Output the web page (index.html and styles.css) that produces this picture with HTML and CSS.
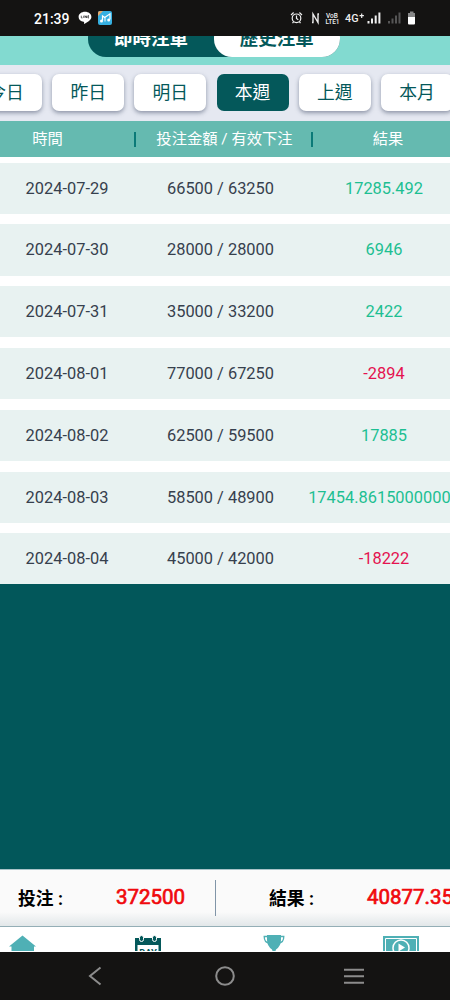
FILE: index.html
```html
<!DOCTYPE html>
<html lang="zh-Hant">
<head>
    <meta charset="UTF-8">
    <meta name="viewport" content="width=device-width, initial-scale=1.0">
    <title>歷史注單</title>
    <link rel="stylesheet" href="styles.css">
</head>
<body>
    <div class="status">
        <span class="clock">21:39</span>
        <svg class="line-icon" width="14" height="14" viewBox="0 0 14 14">
            <path d="M7 .8C3.400 .8.600 3 .600 5.900c0 2.500 2.100 4.400 5 4.900.7.200.6.600.4 2.200 2.700-1.400 7.400-4 7.400-7.100C13.400 3 10.600.8 7 .8z" fill="#fff"/>
            <path d="M3.300 4.700v2.200h1.200M5.700 4.700v2.200M7 6.900V4.700l1.500 2.200V4.700M11 4.700H9.900v2.200H11M9.900 5.800h1" fill="none" stroke="#222" stroke-width=".7"/>
        </svg>
        <svg class="music-icon" width="14" height="14" viewBox="0 0 14 14">
            <rect width="14" height="14" rx="2" fill="#36b0e2"/>
            <path d="M0 2a2 2 0 0 1 2-2h3L0 5z" fill="#e8a86a"/>
            <path d="M4.500 9.500V5l2.200 1.500L12 2.800v5.700" fill="none" stroke="#fff" stroke-width="1.200"/>
            <circle cx="3.500" cy="10" r="1.500" fill="#fff"/>
            <circle cx="10.700" cy="9" r="1.500" fill="#fff"/>
            <path d="M7 6.500v4" stroke="#fff"/>
        </svg>
        <svg class="signals" width="130" height="18" viewBox="0 0 130 18">
            <g fill="none" stroke="#eee" stroke-width="1.200">
                <circle cx="7.500" cy="9.300" r="4.300"/>
                <path d="M7.500 6.500v3l1.800 1.200M2 6l2.600-2.500M13 6l-2.600-2.500M4.500 13l-1 1.200M10.500 13l1 1.200"/>
                <path d="M24 13.500V5l5 8.500V5M23 13.500h1.600M28.400 5H30" stroke-width="1.400"/>
            </g>
            <g class="glyphs" fill="#eee">
                <text x="37" y="8.500" font-size="6.500">VoB</text>
                <text x="36.500" y="14.500" font-size="6.500">LTE1</text>
                <text x="56" y="13.200" font-size="10.800">4G</text>
                <path d="M70.500 6.700h4.400M72.700 4.500v4.400" stroke="#eee" stroke-width="1.200"/>
                <path d="M78.500 12h2v2.500h-2zM82 9.500h2v5h-2zM85.700 6.500h2v8h-2zM89.400 3.500h2v11h-2z"/>
                <path d="M99 12h2v2.500h-2zM102.500 9.500h2v5h-2zM106 6.500h2v8h-2zM109.500 3.500h2v11h-2z" fill="#555"/>
            </g>
            <path d="M121 2.500h3.500V4h1.500v5h-7V4h2z" fill="#888"/>
            <path d="M119 8h7v6.500q0 1-1 1h-5q-1 0-1-1z" fill="#fff"/>
        </svg>
    </div>

    <div class="top">
        <div class="switch">
            <div class="switch-item">即時注單</div>
            <div class="switch-item on">歷史注單</div>
        </div>
    </div>

    <div class="tabs">
        <div class="tab">今日</div>
        <div class="tab">昨日</div>
        <div class="tab">明日</div>
        <div class="tab active">本週</div>
        <div class="tab">上週</div>
        <div class="tab">本月</div>
    </div>

    <div class="thead">
        <span class="th-time">時間</span>
        <span class="th-bet">投注金額 / 有效下注</span>
        <span class="th-result">結果</span>
    </div>

    <div class="list">
        <div class="row"><span>2024-07-29</span><span>66500 / 63250</span><span class="win">17285.492</span></div>
        <div class="row"><span>2024-07-30</span><span>28000 / 28000</span><span class="win">6946</span></div>
        <div class="row"><span>2024-07-31</span><span>35000 / 33200</span><span class="win">2422</span></div>
        <div class="row"><span>2024-08-01</span><span>77000 / 67250</span><span class="lose">-2894</span></div>
        <div class="row"><span>2024-08-02</span><span>62500 / 59500</span><span class="win">17885</span></div>
        <div class="row"><span>2024-08-03</span><span>58500 / 48900</span><span class="win">17454.86150000000</span></div>
        <div class="row"><span>2024-08-04</span><span>45000 / 42000</span><span class="lose">-18222</span></div>
    </div>

    <div class="empty"></div>

    <div class="total">
        <div class="total-bet"><b>投注 :</b><span class="sum">372500</span></div>
        <div class="total-result"><b>結果 :</b><span class="sum">40877.35</span></div>
    </div>

    <div class="menu">
        <svg class="home" width="28" height="24" viewBox="0 0 28 24">
            <path d="M13.500 8.500L27 19.500H25V24H2.500v-4.500H0z" fill="#4fb0b5"/>
        </svg>
        <svg class="day" width="26" height="24" viewBox="0 0 26 24">
            <path d="M0 11h26v13H0z" fill="#04585a"/>
            <path d="M2.500 18h21v6h-21z" fill="#fff"/>
            <g fill="#04585a" stroke="#fff"><rect x="4.500" y="8.500" width="4" height="6" rx="2"/><rect x="17.500" y="8.500" width="4" height="6" rx="2"/></g>
            <text class="day-text" x="13" y="29" font-size="9.500" text-anchor="middle" fill="#04585a">DAY</text>
        </svg>
        <svg class="cup" width="22" height="24" viewBox="0 0 22 24">
            <path d="M4 8h14v5q0 6-5 9.500l-.5 1.500h-3l-.5-1.500q-5-3.500-5-9.500z" fill="#4fb0b5"/>
            <path d="M5 9.500H1.200q0 6 5 6.500M17 9.500h3.800q0 6-5 6.500" fill="none" stroke="#4fb0b5" stroke-width="1.300"/>
        </svg>
        <svg class="video" width="36" height="24" viewBox="0 0 36 24">
            <path d="M0 9h36v15H0z" fill="#4fb0b5"/>
            <path d="M2.500 24V11.500h31V24" fill="none" stroke="#fff"/>
            <circle cx="18" cy="21" r="8" fill="none" stroke="#fff" stroke-width="1.500"/>
            <path d="M15.500 16.500l6.500 4-6.500 4z" fill="#fff"/>
        </svg>
    </div>

    <div class="navbar">
        <svg class="back" width="14" height="20" viewBox="0 0 14 20"><path d="M12.500 1.500L2 10l10.500 8.500" fill="none" stroke="#8c8c8c" stroke-width="2"/></svg>
        <svg class="circle" width="20" height="20" viewBox="0 0 20 20"><circle cx="10" cy="10" r="8.800" fill="none" stroke="#8c8c8c" stroke-width="2"/></svg>
        <svg class="bars" width="20" height="20" viewBox="0 0 20 20"><path d="M0 3.700h20M0 10.200h20M0 16.700h20" stroke="#8c8c8c" stroke-width="2"/></svg>
    </div>
</body>
</html>
```
FILE: styles.css
```css
* {
    box-sizing: border-box;
}
body {
    margin: 0;
    width: 450px;
    height: 1000px;
    overflow: hidden;
    display: flex;
    flex-direction: column;
    background-color: #fff;
    font-family: Roboto, "Noto Sans CJK TC", sans-serif;
}
svg {
    display: block;
    flex: none;
}
.status {
    height: 36px;
    flex: none;
    display: flex;
    align-items: center;
    padding-left: 34px;
    background-color: #141312;
    color: #fff;
}
.clock {
    width: 44px;
    font-size: 14px;
    font-weight: 500;
    padding-top: 2px;
}
.music-icon {
    margin-left: 6px;
}
.signals {
    margin-left: 177px;
}
.glyphs {
    font-weight: 500;
}
.top {
    height: 29px;
    flex: none;
    display: flex;
    align-items: flex-end;
    padding: 0 0 8px 88px;
    overflow: hidden;
    background-color: #82dad0;
}
.switch {
    width: 252px;
    height: 37px;
    flex: none;
    display: flex;
    border-radius: 18px;
    background-color: #04585a;
    color: #fff;
    font-size: 18.5px;
    font-weight: 700;
    line-height: 39px;
    text-align: center;
}
.switch-item {
    width: 126px;
}
.switch-item.on {
    height: 36.5px;
    width: 125.5px;
    background-color: #fff;
    color: #04585a;
    border-radius: 18px;
}
.tabs {
    height: 56px;
    flex: none;
    display: flex;
    gap: 10.2px;
    padding-top: 9px;
    overflow: hidden;
    background-color: #e5e8f1;
}
.tab {
    width: 72px;
    height: 37px;
    flex: none;
    border-radius: 7px;
    background-color: #fff;
    box-shadow: 0 2px 4px rgba(70, 80, 105, .55);
    color: #04585a;
    font-size: 17.8px;
    line-height: 37px;
    text-align: center;
}
.tab:first-child {
    margin-left: -30px;
}
.tab.active {
    background-color: #04585a;
    box-shadow: none;
    color: #fff;
}
.thead {
    height: 36px;
    flex: none;
    display: flex;
    align-items: center;
    background-color: #65bab0;
    color: #fff;
    font-size: 15.3px;
    line-height: 15px;
    text-align: center;
}
.thead span {
    flex: none;
}
.th-time {
    width: 136px;
    padding-right: 39px;
    border-right: 2px solid #0b7a78;
}
.th-bet {
    width: 177px;
    padding-left: 2px;
    border-right: 2px solid #0b7a78;
}
.th-result {
    width: 150px;
}
.list {
    flex: none;
    display: flex;
    flex-direction: column;
    gap: 10.6px;
    padding-top: 5.6px;
}
.row {
    height: 51.2px;
    display: grid;
    grid-template-columns: 134px 173px 154px;
    align-items: center;
    background-color: #e8f2f1;
    color: #36404d;
    font-size: 16.4px;
    text-align: center;
    overflow: hidden;
}
.row .win {
    color: #1dbf92;
}
.row .lose {
    color: #e4134f;
}
.empty {
    flex: 1;
    background-color: #02575a;
}
.total {
    height: 58px;
    flex: none;
    display: flex;
    align-items: center;
    border-top: 1px solid #a9c3c8;
    border-bottom: 1px solid #94aeb6;
    background: linear-gradient(#fafafa 75%, #e2e7e9);
    font-size: 17.8px;
    white-space: nowrap;
    overflow: hidden;
}
.total-bet {
    width: 216px;
    height: 36px;
    flex: none;
    display: flex;
    align-items: center;
    padding-left: 18px;
    border-right: 1px solid #8195a8;
}
.total-result {
    flex: none;
    display: flex;
    align-items: center;
    padding-left: 53px;
}
.total b {
    width: 98px;
    padding-bottom: 3px;
}
.sum {
    color: #f0090d;
    font-size: 20.5px;
    padding-bottom: 2px;
    -webkit-text-stroke: .7px #f0090d;
}
.menu {
    height: 25px;
    flex: none;
    display: flex;
    padding-left: 9px;
    background-color: #fff;
}
.day {
    margin-left: 98px;
}
.cup {
    margin-left: 102px;
}
.video {
    margin-left: 98px;
}
.day-text {
    font-weight: 700;
}
.navbar {
    height: 48px;
    flex: none;
    display: flex;
    align-items: center;
    padding-left: 88px;
    background-color: #141312;
}
.circle {
    margin-left: 113px;
}
.bars {
    margin-left: 109px;
}
```
